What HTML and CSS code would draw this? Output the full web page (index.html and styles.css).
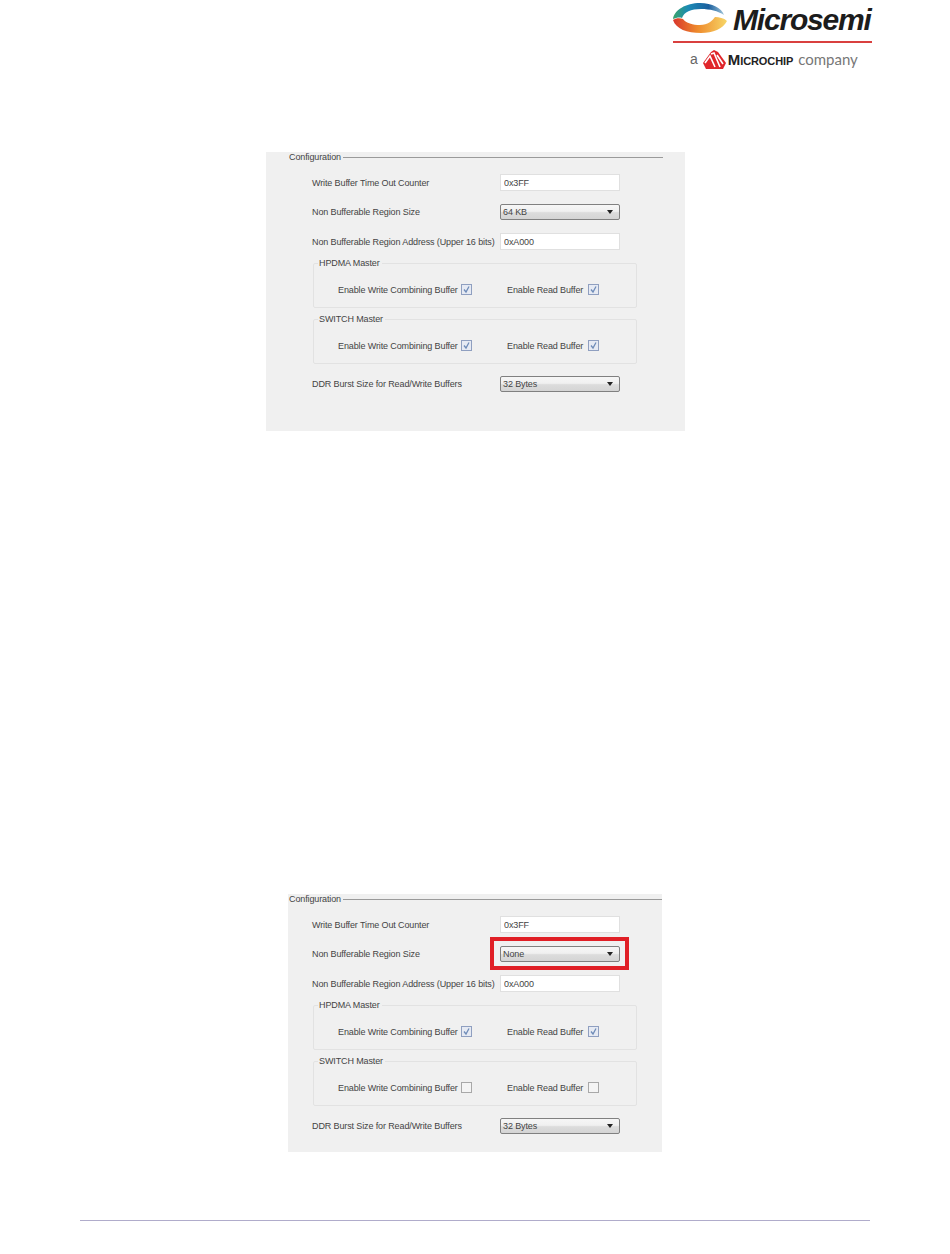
FILE: index.html
```html
<!DOCTYPE html>
<html>
<head>
<title>Configuration</title>
<link rel="stylesheet" href="styles.css">
</head>
<body>

<div class="header">
  <div class="logo">
    <div class="logoTop">
      <svg class="swoosh" width="54" height="31" viewBox="0 0 54 31">
        <defs>
          <linearGradient id="topBand" x1="0" y1="0" x2="1" y2="0">
            <stop offset="0" stop-color="#3aa36a"/>
            <stop offset="0.3" stop-color="#1b8ab5"/>
            <stop offset="0.7" stop-color="#1a5f9e"/>
            <stop offset="1" stop-color="#9fc4d8"/>
          </linearGradient>
          <linearGradient id="lowBand" x1="0" y1="0" x2="1" y2="0">
            <stop offset="0" stop-color="#d8352c"/>
            <stop offset="0.45" stop-color="#ee8a2c"/>
            <stop offset="1" stop-color="#f7d667"/>
          </linearGradient>
        </defs>
        <path fill="url(#topBand)" d="M0 16C1 7 13 0 27 0C39 0 49 5 51 12C45 8 37 6 28 6C18 6 11 9 9 15C6 14 3 15 0 16Z"/>
        <path fill="url(#lowBand)" d="M0 17C3 15 7 15 10 16C13 20 20 22 27 22C35 22 39 18 42 14C46 14 51 15 54 18C50 26 40 30 28 30C14 30 3 26 0 17Z"/>
      </svg>
      <span class="brand">Microsemi</span>
    </div>
    <div class="logoLine"></div>
    <div class="logoBottom">
      <span class="logoA">a</span>
      <svg class="chip" width="23" height="19" viewBox="0 0 23 19">
        <path fill="#e0262b" d="M11 0L15 2L23 13L20 19H3L0 13L8 2Z"/>
        <path fill="none" stroke="#fff" stroke-width="1.6" d="M2 13L7 6L12 17M8 4L11 3L17 17M14 5L20 14"/>
      </svg>
      <span class="chipName">Microchip</span>
      <span class="company">company</span>
    </div>
  </div>
</div>

<div class="panel first">
  <fieldset class="config">
    <legend>Configuration</legend>
    <div class="row">
      <label>Write Buffer Time Out Counter</label>
      <input type="text" class="field" value="0x3FF">
    </div>
    <div class="row">
      <label>Non Bufferable Region Size</label>
      <div class="combo">64 KB</div>
    </div>
    <div class="row">
      <label>Non Bufferable Region Address (Upper 16 bits)</label>
      <input type="text" class="field" value="0xA000">
    </div>
    <fieldset class="group">
      <legend>HPDMA Master</legend>
      <div class="checks">
        <span class="checkName">Enable Write Combining Buffer</span>
        <span class="box on"><svg width="9" height="9" viewBox="0 0 9 9"><path d="M2 4.5L4 7L7 1.5"/></svg></span>
        <span class="checkName second">Enable Read Buffer</span>
        <span class="box on"><svg width="9" height="9" viewBox="0 0 9 9"><path d="M2 4.5L4 7L7 1.5"/></svg></span>
      </div>
    </fieldset>
    <fieldset class="group">
      <legend>SWITCH Master</legend>
      <div class="checks">
        <span class="checkName">Enable Write Combining Buffer</span>
        <span class="box on"><svg width="9" height="9" viewBox="0 0 9 9"><path d="M2 4.5L4 7L7 1.5"/></svg></span>
        <span class="checkName second">Enable Read Buffer</span>
        <span class="box on"><svg width="9" height="9" viewBox="0 0 9 9"><path d="M2 4.5L4 7L7 1.5"/></svg></span>
      </div>
    </fieldset>
    <div class="row">
      <label>DDR Burst Size for Read/Write Buffers</label>
      <div class="combo">32 Bytes</div>
    </div>
  </fieldset>
</div>

<div class="panel last">
  <fieldset class="config">
    <legend>Configuration</legend>
    <div class="row">
      <label>Write Buffer Time Out Counter</label>
      <input type="text" class="field" value="0x3FF">
    </div>
    <div class="row">
      <label>Non Bufferable Region Size</label>
      <div class="combo">None<div class="redBox"></div></div>
    </div>
    <div class="row">
      <label>Non Bufferable Region Address (Upper 16 bits)</label>
      <input type="text" class="field" value="0xA000">
    </div>
    <fieldset class="group">
      <legend>HPDMA Master</legend>
      <div class="checks">
        <span class="checkName">Enable Write Combining Buffer</span>
        <span class="box on"><svg width="9" height="9" viewBox="0 0 9 9"><path d="M2 4.5L4 7L7 1.5"/></svg></span>
        <span class="checkName second">Enable Read Buffer</span>
        <span class="box on"><svg width="9" height="9" viewBox="0 0 9 9"><path d="M2 4.5L4 7L7 1.5"/></svg></span>
      </div>
    </fieldset>
    <fieldset class="group">
      <legend>SWITCH Master</legend>
      <div class="checks">
        <span class="checkName">Enable Write Combining Buffer</span>
        <span class="box"></span>
        <span class="checkName second">Enable Read Buffer</span>
        <span class="box"></span>
      </div>
    </fieldset>
    <div class="row">
      <label>DDR Burst Size for Read/Write Buffers</label>
      <div class="combo">32 Bytes</div>
    </div>
  </fieldset>
</div>

<div class="footerLine"></div>

</body>
</html>
```
FILE: styles.css
```css
body {
  margin: 0;
  background-color: #FFFFFF;
  font-family: "Liberation Sans", Arial, sans-serif;
  color: #444444;
}

.header {
  height: 152px;
  padding-left: 673px;
  box-sizing: border-box;
  padding-top: 3px;
}
.logo {
  width: 199px;
}
.logoTop {
  display: flex;
  align-items: flex-start;
  height: 37px;
}
.swoosh {
  flex-shrink: 0;
}
.brand {
  margin-left: 6px;
  font-size: 30px;
  line-height: 33px;
  font-weight: bold;
  font-style: italic;
  letter-spacing: -1.2px;
  white-space: nowrap;
  color: #1c1c1c;
}
.logoLine {
  height: 2px;
  margin-top: 1px;
  background-color: #d9403f;
}
.logoBottom {
  display: flex;
  align-items: center;
  height: 20px;
  margin-top: 6px;
  padding-left: 17px;
}
.logoA {
  font-size: 14px;
  color: #666666;
  margin-right: 5px;
}
.chipName {
  margin-left: 2px;
  font-size: 15px;
  font-weight: bold;
  font-variant: small-caps;
  letter-spacing: -0.1px;
  color: #222222;
}
.company {
  margin-left: 5px;
  font-family: "Lato", sans-serif;
  font-size: 15px;
  color: #777777;
}

.panel {
  background-color: #F0F0F0;
  box-sizing: border-box;
  font-size: 9px;
  letter-spacing: -0.12px;
}
.first {
  width: 419px;
  height: 279px;
  margin-left: 266px;
  padding-left: 22px;
}
.last {
  width: 374px;
  height: 258px;
  margin-left: 288px;
  margin-top: 463px;
}

.config {
  width: 374px;
  margin: 0 0 0 1px;
  padding: 11px 0 0 23px;
  box-sizing: border-box;
  border: 0;
  border-top: 1px solid #9a9a9a;
}
.last .config {
  width: 373px;
}
.config > legend {
  padding: 0 2px 0 0;
  margin-left: -23px;
  line-height: 11px;
}

.row {
  display: flex;
  align-items: center;
  height: 17px;
  margin-bottom: 12.5px;
}
.row label {
  width: 188px;
  flex-shrink: 0;
  white-space: nowrap;
}
.field {
  width: 120px;
  height: 17px;
  box-sizing: border-box;
  padding: 0 3px;
  border: 1px solid #e0e0e0;
  background-color: #FFFFFF;
  font-family: inherit;
  font-size: 9px;
  letter-spacing: inherit;
  color: #444444;
}
.combo {
  position: relative;
  width: 120px;
  height: 16px;
  box-sizing: border-box;
  padding-left: 2px;
  line-height: 14px;
  border: 1px solid #808080;
  border-radius: 2px;
  background: linear-gradient(#f6f6f6, #f0f0f0 45%, #dcdcdc 55%, #d4d4d4);
}
.combo::after {
  content: "";
  position: absolute;
  right: 6px;
  top: 5px;
  border-left: 3.5px solid transparent;
  border-right: 3.5px solid transparent;
  border-top: 4px solid #222222;
}
.redBox {
  position: absolute;
  left: -11px;
  top: -10px;
  width: 139px;
  height: 33px;
  box-sizing: border-box;
  border: 4px solid #e01f26;
}

.group {
  width: 324px;
  height: 50px;
  margin: 0 0 6px 1px;
  padding: 0 0 0 24px;
  box-sizing: border-box;
  border: 1px solid #e2e2e2;
  border-radius: 2px;
}
.group legend {
  margin-left: -20px;
  padding: 0 2px 0 1px;
  line-height: 11px;
}
.group:first-of-type {
  margin-top: -4.5px;
}
.group:last-of-type {
  margin-bottom: 11px;
}
.checks {
  display: flex;
  align-items: center;
  height: 17px;
  margin-top: 12px;
}
.checkName {
  width: 123px;
  white-space: nowrap;
}
.second {
  width: 81px;
  margin-left: 35px;
}
.box {
  width: 11px;
  height: 11px;
  box-sizing: border-box;
  border: 1px solid #a8a8a8;
  background-color: #F4F4F4;
  display: flex;
  align-items: center;
  justify-content: center;
}
.on {
  border-color: #8f9fc0;
  background-color: #E6EAF3;
}
.box path {
  fill: none;
  stroke: #6f8cb8;
  stroke-width: 1.3;
}

.footerLine {
  height: 1px;
  margin: 68px 80px 0;
  background-color: #b0accb;
}
```
